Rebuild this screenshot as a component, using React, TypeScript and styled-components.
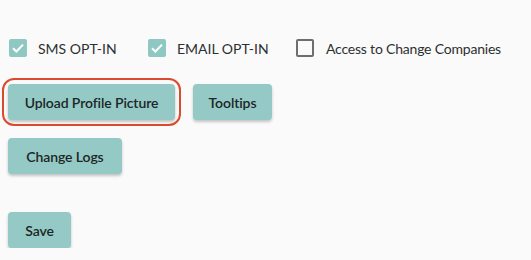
import React from "react";
import styled, { createGlobalStyle } from "styled-components";

const Global = createGlobalStyle`
  html, body { margin: 0; padding: 0; background: #fafafa; }
  body { font-family: "Lato", "Open Sans", sans-serif; color: #1f2b2b; }
`;

const Page = styled.div`
  display: flex;
  flex-direction: column;
  padding: 39px 0 0 8px;
`;

const CheckRow = styled.div`
  display: flex;
  align-items: center;
  height: 18px;
  margin: 0 0 27px 1px;
`;

const CheckItem = styled.label<{ $w?: number; $caps?: boolean }>`
  display: flex;
  align-items: center;
  width: ${(p) => (p.$w ? `${p.$w}px` : "auto")};
  font-size: 14px;
  color: #2c3030;
  letter-spacing: ${(p) => (p.$caps ? "0px" : "-0.2px")};
`;

const Box = styled.span<{ $checked: boolean }>`
  box-sizing: border-box;
  flex: none;
  width: 18px;
  height: 18px;
  border-radius: 2px;
  margin-right: ${(p) => (p.$checked ? 11 : 12)}px;
  display: flex;
  align-items: center;
  justify-content: center;
  background: ${(p) => (p.$checked ? "#8fc7c3" : "transparent")};
  border: ${(p) => (p.$checked ? "none" : "2px solid #6e6e6e")};
`;

const ButtonRow = styled.div<{ $mb: number }>`
  display: flex;
  gap: 18px;
  margin-bottom: ${(p) => p.$mb}px;
`;

const Ring = styled.div<{ $active: boolean }>`
  border-radius: 12px;
  margin: -6px;
  padding: 4px;
  border: 2px solid ${(p) => (p.$active ? "#dc4a2e" : "transparent")};
  display: flex;
`;

const Button = styled.button<{ $w: number }>`
  box-sizing: border-box;
  width: ${(p) => p.$w}px;
  height: 36px;
  border: none;
  border-radius: 4px;
  background: #95c9c5;
  color: #1b2626;
  font-family: "Lato", sans-serif;
  font-weight: 600;
  font-size: 14px;
  letter-spacing: -0.1px;
  box-shadow: 0 2px 3px rgba(0, 0, 0, 0.22);
  padding: 0;
`;

const Check = () => (
  <svg width="14" height="14" viewBox="0 0 14 14">
    <path d="M2 7.2 L5.4 10.5 L12 3.6" fill="none" stroke="#fff" strokeWidth="2" />
  </svg>
);

export default function App() {
  return (
    <>
      <Global />
      <Page>
        <CheckRow>
          <CheckItem $w={139} $caps>
            <Box $checked><Check /></Box>SMS OPT-IN
          </CheckItem>
          <CheckItem $w={148} $caps>
            <Box $checked><Check /></Box>EMAIL OPT-IN
          </CheckItem>
          <CheckItem>
            <Box $checked={false} />Access to Change Companies
          </CheckItem>
        </CheckRow>
        <ButtonRow $mb={18}>
          <Ring $active>
            <Button $w={167}>Upload Profile Picture</Button>
          </Ring>
          <Button $w={79}>Tooltips</Button>
        </ButtonRow>
        <ButtonRow $mb={38}>
          <Button $w={114}>Change Logs</Button>
        </ButtonRow>
        <ButtonRow $mb={0}>
          <Button $w={63}>Save</Button>
        </ButtonRow>
      </Page>
    </>
  );
}
